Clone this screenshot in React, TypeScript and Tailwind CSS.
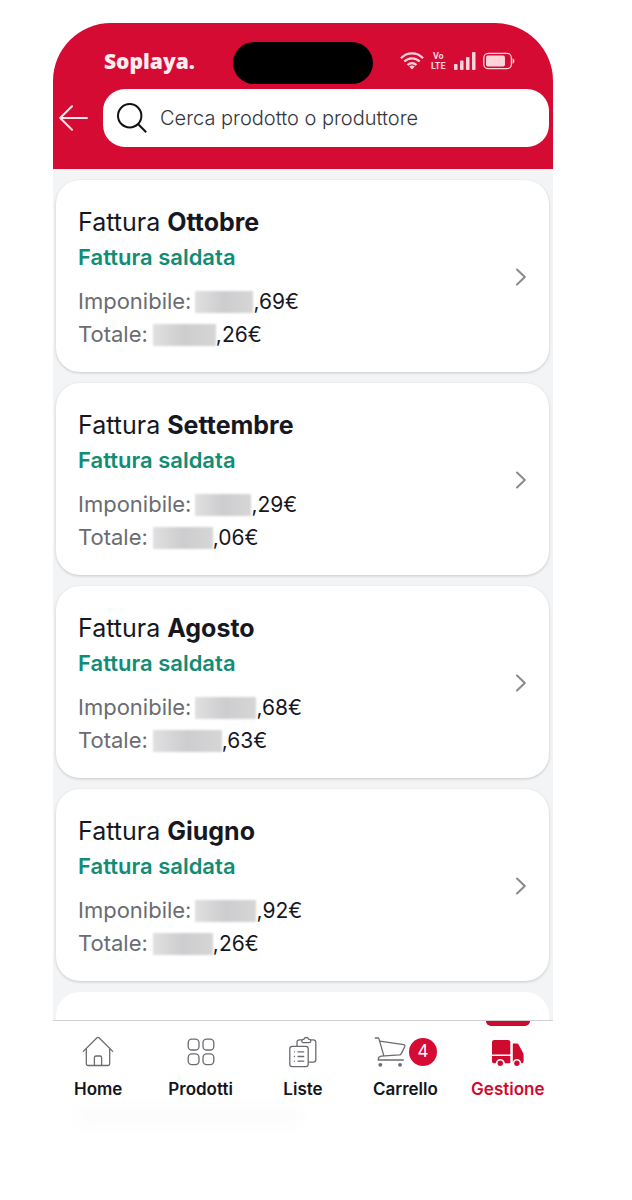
import React from 'react'

interface Invoice {
  month: string
  taxable: string
  taxableMask: string
  total: string
  totalMask: string
}

const invoices: Invoice[] = [
  { month: 'Ottobre', taxable: ',69€', taxableMask: 'w-[58px]', total: ',26€', totalMask: 'w-[63px]' },
  { month: 'Settembre', taxable: ',29€', taxableMask: 'w-[56px]', total: ',06€', totalMask: 'w-[60px]' },
  { month: 'Agosto', taxable: ',68€', taxableMask: 'w-[61px]', total: ',63€', totalMask: 'w-[69px]' },
  { month: 'Giugno', taxable: ',92€', taxableMask: 'w-[61px]', total: ',26€', totalMask: 'w-[60px]' },
]

const WifiIcon = () => (
  <svg width="24" height="18" viewBox="0 0 24 18" fill="none" stroke="currentColor" strokeWidth="2.2">
    <path d="M1 6.2C7-.2 17-.2 23 6.2M4.3 9.6c4.2-4.4 11.2-4.4 15.4 0M7.6 13c2.4-2.5 6.4-2.5 8.8 0" />
    <path d="M12 17.4l-2.8-2.9c1.6-1.4 4-1.4 5.6 0z" fill="currentColor" stroke="none" />
  </svg>
)

const SignalIcon = () => (
  <svg width="22" height="18" viewBox="0 0 22 18" fill="currentColor">
    <rect x="0" y="12" width="3.5" height="6" rx=".8" />
    <rect x="6" y="8.5" width="3.5" height="9.5" rx=".8" />
    <rect x="12" y="5" width="3.5" height="13" rx=".8" />
    <rect x="18" y="0" width="3.5" height="18" rx=".8" />
  </svg>
)

const BatteryIcon = () => (
  <svg width="32" height="18" viewBox="0 0 32 18" fill="none">
    <rect x=".8" y="1.3" width="27.6" height="15.4" rx="4.5" stroke="currentColor" strokeWidth="1.3" />
    <rect x="3" y="3.5" width="19" height="11" rx="2" fill="currentColor" />
    <path d="M29.6 6.2c2.4 1 2.4 4.6 0 5.6z" fill="currentColor" />
  </svg>
)

const HomeIcon = () => (
  <svg width="32" height="32" viewBox="0 0 32 32" fill="none" stroke="currentColor" strokeWidth="1.3" strokeLinecap="round" strokeLinejoin="round">
    <path d="M1.3 15.4L15 1.7a1.4 1.4 0 0 1 2 0l13.7 13.7" />
    <path d="M4.3 13v14.8c0 1 .7 1.7 1.7 1.7h20c1 0 1.7-.7 1.7-1.7V13" />
    <path d="M12.4 29.3v-7.6c0-1 .7-1.7 1.7-1.7h3.8c1 0 1.7.7 1.7 1.7v7.6" />
  </svg>
)

const GridIcon = () => (
  <svg width="32" height="32" viewBox="0 0 32 32" fill="none" stroke="currentColor" strokeWidth="1.3">
    <rect x="3.2" y="3.2" width="10.8" height="10.8" rx="3.6" />
    <rect x="18" y="3.2" width="10.8" height="10.8" rx="3.6" />
    <rect x="3.2" y="17.8" width="10.8" height="10.8" rx="3.6" />
    <rect x="18" y="17.8" width="10.8" height="10.8" rx="3.6" />
  </svg>
)

const ListIcon = () => (
  <svg width="32" height="32" viewBox="0 0 32 32" fill="none" stroke="currentColor" strokeWidth="1.3" strokeLinecap="round" strokeLinejoin="round">
    <path d="M10 10V6.2c0-1.5 1-2.4 2.4-2.4h2.4M23.8 3.8h2.4c1.6 0 2.6 1 2.6 2.4v17.6c0 1.6-1 2.4-2.6 2.4H22" />
    <path d="M14.8 5c0-1 .6-1.7 1.5-1.7h.6c.5-1.3 1.3-1.8 2.4-1.8s1.9.5 2.4 1.8h.6c.9 0 1.5.7 1.5 1.7s-.6 1.6-1.5 1.6h-6c-.9 0-1.5-.6-1.5-1.6z" />
    <rect x="2.8" y="10.3" width="18.4" height="20.4" rx="2.4" />
    <path d="M11 15.8h5.7M11 20.5h5.7M11 25.2h5.7M7.4 15.8h.1M7.4 20.5h.1M7.4 25.2h.1" />
  </svg>
)

const CartIcon = () => (
  <svg width="32" height="32" viewBox="0 0 32 32" fill="none" stroke="currentColor" strokeWidth="1.3" strokeLinecap="round" strokeLinejoin="round">
    <path d="M1.3 2h2.5c.6 0 1 .3 1.2.9l4.8 16.7" />
    <path d="M5.7 5.2l24 3.5c1 .2 1.5.9 1.1 1.8l-3.5 7.1c-.4.8-.9 1.2-1.9 1.3L7.3 20.1c-2 .2-3 1.3-3 3.3v.6h25" />
    <circle cx="6.3" cy="28.8" r="1.9" fill="currentColor" stroke="none" />
    <circle cx="26" cy="28.8" r="1.9" fill="currentColor" stroke="none" />
  </svg>
)

const TruckIcon = () => (
  <svg width="32" height="32" viewBox="0 0 32 32" fill="currentColor">
    <path d="M2.4 4h13.6c1.4 0 2.3.9 2.3 2.3v12.3H0V6.3C0 4.9 1 4 2.4 4z" />
    <path d="M0 20.1h18.3v7.2h-5.4c-.4-2.6-2.2-4.2-4.6-4.2s-4.2 1.600-4.600 4.200H2.300C.8 27.300 0 26.400 0 25z" />
    <path d="M20.8 7.600h3.800c1 0 1.700.4 2.200 1.300l3.700 6.800c.8 1.300 1.100 2.300 1.100 3.700v5.500c0 1.500-.8 2.400-2.200 2.400-.5-2.700-2.200-4.200-4.500-4.200-1.900 0-3.300 1.100-4.100 3.100z" />
    <circle cx="8.300" cy="27.200" r="2.700" />
    <circle cx="24.900" cy="27.200" r="2.700" />
  </svg>
)

const StatusBar = () => (
  <div className="grid grid-cols-[1fr_140px_1fr] items-center">
    <p className="pb-1 pl-[51px] font-['Open_Sans','Liberation_Sans',sans-serif] text-[21px] leading-6 font-extrabold text-[#ffeef0]">Soplaya.</p>
    <div className="h-[42px] rounded-full bg-black" />
    <div className="flex items-center pb-1 pl-[27px] text-[#ffd3da]">
      <WifiIcon />
      <div className="ml-[7px] text-center font-[Roboto,'Liberation_Sans',sans-serif] text-[9px] leading-[10px] font-bold">
        <p>Vo</p>
        <p>LTE</p>
      </div>
      <div className="ml-2">
        <SignalIcon />
      </div>
      <div className="ml-[7px]">
        <BatteryIcon />
      </div>
    </div>
  </div>
)

const SearchBar = () => (
  <div className="mt-[5px] flex items-center pr-1">
    <button type="button" aria-label="Indietro" className="flex w-[50px] shrink-0 pl-[6px] text-[#ffe4e8]">
      <svg width="30" height="26" viewBox="0 0 30 26" fill="none" stroke="currentColor" strokeWidth="2" strokeLinecap="round" strokeLinejoin="round">
        <path d="M28 13H1.2M13 1.2L1.2 13 13 24.8" />
      </svg>
    </button>
    <label className="flex h-[58px] min-w-0 flex-1 items-center gap-[13px] rounded-[22px] bg-white pl-[14px]">
      <svg width="30" height="30" viewBox="0 0 30 30" fill="none" stroke="#111" strokeWidth="2" className="shrink-0">
        <circle cx="12.7" cy="12.7" r="11.7" />
        <path d="M21 21l8.2 8.2" />
      </svg>
      <input
        type="search"
        aria-label="Cerca prodotto o produttore"
        placeholder="Cerca prodotto o produttore"
        className="min-w-0 flex-1 bg-transparent text-[20px] font-light outline-none placeholder:text-[#33363d]"
      />
    </label>
  </div>
)

const Mask: React.FC<{ width: string }> = ({ width }) => (
  <span className={`h-[22px] bg-linear-to-r from-[#e0e0e1] via-[#cdcdcf] to-[#d6d6d7] blur-[1px] ${width}`} />
)

const InvoiceCard: React.FC<{ invoice: Invoice }> = ({ invoice }) => (
  <a
    href="#fattura"
    className="flex items-center justify-between rounded-[24px] bg-white pt-[26px] pr-[23px] pb-[21px] pl-[22px] shadow-[0_1px_3px_rgba(0,0,0,0.18)]"
  >
    <div>
      <h2 className="text-[25px] leading-8 text-[#16171f]">
        Fattura <strong className="font-bold">{invoice.month}</strong>
      </h2>
      <p className="text-[22px] leading-[38px] font-semibold text-[#128c75]">Fattura saldata</p>
      <dl className="mt-[9px] text-[22px] leading-[33px] text-[#16171f]">
        <div className="flex items-center">
          <dt className="mr-1 text-[#6a6c71]">Imponibile:</dt>
          <dd className="flex items-center text-[21px]">
            <Mask width={invoice.taxableMask} />
            {invoice.taxable}
          </dd>
        </div>
        <div className="flex items-center">
          <dt className="mr-[5px] text-[#6a6c71]">Totale:</dt>
          <dd className="flex items-center text-[21px]">
            <Mask width={invoice.totalMask} />
            {invoice.total}
          </dd>
        </div>
      </dl>
    </div>
    <svg width="10" height="18" viewBox="0 0 10 18" fill="none" stroke="#8a8a8c" strokeWidth="2" strokeLinecap="round" strokeLinejoin="round" className="mb-1">
      <path d="M1 1.5L8.8 9 1 16.5" />
    </svg>
  </a>
)

const NavItem: React.FC<{ label: string; active?: boolean; badge?: number; children: React.ReactNode }> = ({
  label,
  active,
  badge,
  children,
}) => (
  <a
    href={`#${label.toLowerCase()}`}
    className={`relative flex flex-col items-center pt-[15px] ${active ? 'text-[#cf0a2f]' : 'text-[#6b6c70]'}`}
  >
    {active && <span className="absolute top-0 h-[5px] w-11 rounded-b-lg bg-[#cf0a2f]" />}
    <span className="flex items-center gap-[3px]">
      {children}
      {badge && (
        <span className="flex h-7 w-7 items-center justify-center rounded-full bg-[#d60b34] text-[17px] text-white">{badge}</span>
      )}
    </span>
    <span className={`mt-[9px] text-[17px] leading-6 font-semibold ${active ? '' : 'text-[#14151a]'}`}>{label}</span>
  </a>
)

export default function App() {
  return (
    <div className="min-h-screen bg-white pt-[23px] pr-[79px] pb-[70px] pl-[53px] font-['Inter','Liberation_Sans',sans-serif]">
      <header className="rounded-t-[58px] bg-[#d60b34] pt-[19px] pb-[22px]">
        <StatusBar />
        <SearchBar />
      </header>

      <main className="flex flex-col gap-[11px] bg-[#f2f4f5] pt-[11px] pr-1 pl-[3px]">
        {invoices.map((invoice) => (
          <InvoiceCard key={invoice.month} invoice={invoice} />
        ))}
        {/* Top edge of the next card, cut off by the tab bar */}
        <div className="h-7 rounded-t-[24px] bg-white" />
      </main>

      <nav className="border-t border-[#cfd0d2]">
        <div className="-mx-[6px] grid grid-cols-5">
          <NavItem label="Home">
            <HomeIcon />
          </NavItem>
          <NavItem label="Prodotti">
            <GridIcon />
          </NavItem>
          <NavItem label="Liste">
            <ListIcon />
          </NavItem>
          <NavItem label="Carrello" badge={4}>
            <CartIcon />
          </NavItem>
          <NavItem label="Gestione" active>
            <TruckIcon />
          </NavItem>
        </div>
        <div className="mt-1 ml-6 h-6 w-[224px] bg-[#fcfcfc] blur-[6px]" />
      </nav>
    </div>
  )
}
